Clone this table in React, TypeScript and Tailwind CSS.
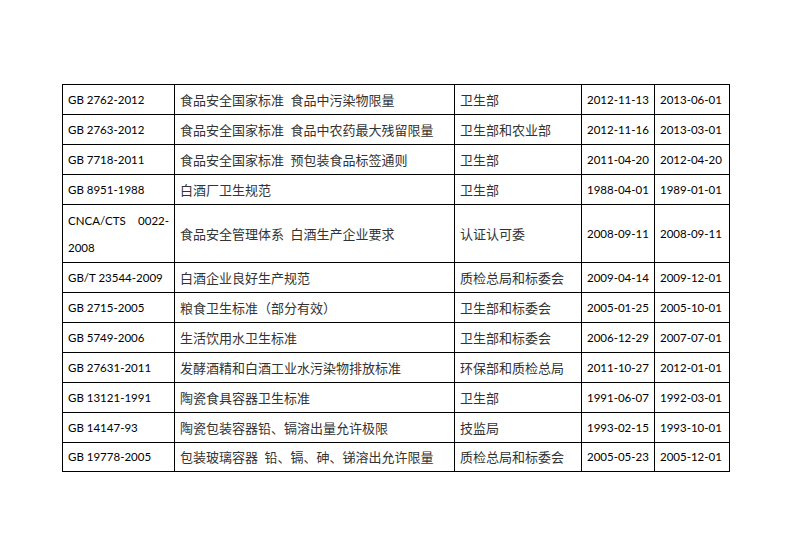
const rows: { code: string; name: string; org: string; issued: string; effective: string; tall?: boolean; h: string }[] = [
  { code: 'GB 2762-2012', name: '食品安全国家标准 食品中污染物限量', org: '卫生部', issued: '2012-11-13', effective: '2013-06-01', h: 'h-[30px]' },
  { code: 'GB 2763-2012', name: '食品安全国家标准 食品中农药最大残留限量', org: '卫生部和农业部', issued: '2012-11-16', effective: '2013-03-01', h: 'h-[30px]' },
  { code: 'GB 7718-2011', name: '食品安全国家标准 预包装食品标签通则', org: '卫生部', issued: '2011-04-20', effective: '2012-04-20', h: 'h-[30px]' },
  { code: 'GB 8951-1988', name: '白酒厂卫生规范', org: '卫生部', issued: '1988-04-01', effective: '1989-01-01', h: 'h-[30px]' },
  { code: 'CNCA/CTS 0022-2008', name: '食品安全管理体系 白酒生产企业要求', org: '认证认可委', issued: '2008-09-11', effective: '2008-09-11', tall: true, h: 'h-[58px]' },
  { code: 'GB/T 23544-2009', name: '白酒企业良好生产规范', org: '质检总局和标委会', issued: '2009-04-14', effective: '2009-12-01', h: 'h-[30px]' },
  { code: 'GB 2715-2005', name: '粮食卫生标准（部分有效）', org: '卫生部和标委会', issued: '2005-01-25', effective: '2005-10-01', h: 'h-[30px]' },
  { code: 'GB 5749-2006', name: '生活饮用水卫生标准', org: '卫生部和标委会', issued: '2006-12-29', effective: '2007-07-01', h: 'h-[30px]' },
  { code: 'GB 27631-2011', name: '发酵酒精和白酒工业水污染物排放标准', org: '环保部和质检总局', issued: '2011-10-27', effective: '2012-01-01', h: 'h-[30px]' },
  { code: 'GB 13121-1991', name: '陶瓷食具容器卫生标准', org: '卫生部', issued: '1991-06-07', effective: '1992-03-01', h: 'h-[30px]' },
  { code: 'GB 14147-93', name: '陶瓷包装容器铅、镉溶出量允许极限', org: '技监局', issued: '1993-02-15', effective: '1993-10-01', h: 'h-[30px]' },
  { code: 'GB 19778-2005', name: '包装玻璃容器 铅、镉、砷、锑溶出允许限量', org: '质检总局和标委会', issued: '2005-05-23', effective: '2005-12-01', h: 'h-[29px]' },
];

const latin = "font-['Lato','Noto_Sans_CJK_SC',sans-serif] text-[11.5px] text-black";
const cjk = "font-['Noto_Sans_CJK_SC',sans-serif] text-[13px] text-[#333]";
const cell = 'flex items-center px-[5px] border-r border-b border-black whitespace-nowrap overflow-hidden';

export default function App() {
  return (
    <div className="w-[792px] h-[560px] bg-white pt-[84px] pl-[62px]">
      {/* standards table */}
      <div className="grid grid-cols-[112px_280px_127px_73px_75px] w-[668px] border-l border-t border-black">
        {rows.map((r) => (
          <div key={r.code} className="contents">
            <div className={`${cell} ${r.h} ${latin}`}>
              {r.tall ? (
                <div className="w-full leading-[27px]">
                  <div className="flex justify-between">
                    <span>CNCA/CTS</span>
                    <span>0022-</span>
                  </div>
                  <div>2008</div>
                </div>
              ) : (
                r.code
              )}
            </div>
            <div className={`${cell} ${r.h} ${cjk}`}>{r.name.replace(' ', '\u2002')}</div>
            <div className={`${cell} ${r.h} ${cjk}`}>{r.org}</div>
            <div className={`${cell} ${r.h} ${latin}`}>{r.issued}</div>
            <div className={`${cell} ${r.h} ${latin}`}>{r.effective}</div>
          </div>
        ))}
      </div>
    </div>
  );
}
